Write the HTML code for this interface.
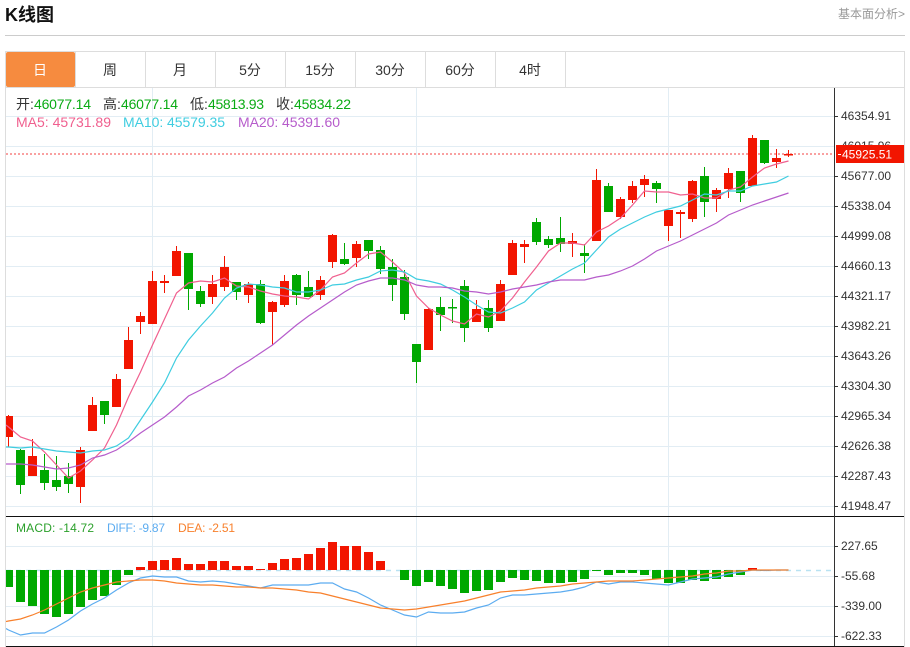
<!DOCTYPE html>
<html lang="zh"><head><meta charset="utf-8"><title>K线图</title>
<style>
html,body{margin:0;padding:0;background:#fff;width:910px;height:647px;overflow:hidden}
svg{display:block}
text{font-family:"Liberation Sans","Noto Sans CJK SC",sans-serif}
</style></head><body>
<svg width="910" height="647" viewBox="0 0 910 647" xmlns="http://www.w3.org/2000/svg">
<defs><clipPath id="c"><rect x="6" y="88" width="828" height="558"/></clipPath></defs>
<text x="5" y="21" font-size="18" font-weight="bold" fill="#111">K线图</text>
<text x="838" y="18" font-size="12" fill="#999">基本面分析&gt;</text>
<path d="M5 35.5H905" stroke="#ccc" fill="none"/>
<!-- frame -->
<path d="M5.5 647V51.5H904.5V647" stroke="#ddd" fill="none"/>
<path d="M6 87.5H904" stroke="#ddd" fill="none"/>
<rect x="6" y="52" width="69" height="35" rx="2" fill="#f68b3f"/>
<path d="M75.5 52V87M145.5 52V87M215.5 52V87M285.5 52V87M355.5 52V87M425.5 52V87M495.5 52V87M565.5 52V87" stroke="#ddd" fill="none"/>
<g font-size="14" text-anchor="middle" fill="#333">
<text x="40" y="75" fill="#fff">日</text><text x="110" y="75">周</text><text x="180" y="75">月</text><text x="250" y="75">5分</text><text x="320" y="75">15分</text><text x="390" y="75">30分</text><text x="460" y="75">60分</text><text x="530" y="75">4时</text>
</g>
<!-- grid -->
<path d="M6 116.5H834M6 146.5H834M6 176.5H834M6 206.5H834M6 236.5H834M6 266.5H834M6 296.5H834M6 326.5H834M6 356.5H834M6 386.5H834M6 416.5H834M6 446.5H834M6 476.5H834M6 506.5H834M6 546.5H834M6 576.5H834M6 606.5H834M6 636.5H834M152.5 88V646M416.5 88V646M668.5 88V646" stroke="#e2edf4" fill="none"/>
<path d="M6 154H834" stroke="#f9a0a0" stroke-width="2" stroke-dasharray="2 2" fill="none"/>
<path d="M6 570.5H834" stroke="#b8e2f2" stroke-width="1.5" stroke-dasharray="5 5" fill="none"/>
<g clip-path="url(#c)" fill="none">
<!-- wicks -->
<path stroke="#f21500" d="M8.5 415V447M32.5 439V476M80.5 447V503M92.5 397V431M116.5 374V407M128.5 327V369M140.5 312V334M152.5 271V324M164.5 275V293M176.5 246V276M212.5 275V304M224.5 256V291M248.5 282V303M272.5 301V345M284.5 275V307M320.5 276V300M332.5 234V268M356.5 241V267M428.5 308V350M476.5 300V322M500.5 280V321M512.5 240V275M524.5 240V263M572.5 233V257M596.5 169V241M620.5 197V219M632.5 181V203M644.5 175V197M668.5 210V241M680.5 210V238M692.5 180V222M716.5 188V212M728.5 168V198M752.5 135V186M776.5 149V168M788.5 150V157"/>
<path stroke="#00a800" d="M20.5 449V494M44.5 454V490M56.5 456V491M68.5 463V493M104.5 401V424M188.5 253V310M200.5 286V307M236.5 282V300M260.5 280V324M296.5 274V305M308.5 271V297M344.5 243V265M368.5 240V259M380.5 246V274M392.5 259V301M404.5 270V320M416.5 344V383M440.5 297V331M452.5 299V323M464.5 280V342M488.5 300V332M536.5 218V245M548.5 236V248M560.5 217V252M584.5 244V273M608.5 183V212M656.5 181V203M704.5 167V217M740.5 171V202M764.5 140V164"/>
<!-- bodies -->
<path stroke="#f21500" stroke-width="9" d="M8.5 416V437M32.5 456V476M80.5 450V487M92.5 405V431M116.5 379V407M128.5 340V369M140.5 316V322M152.5 281V324M164.5 281V283M176.5 251V276M212.5 284V297M224.5 267V287M248.5 284V295M272.5 302V312M284.5 281V305M320.5 280V295M332.5 235V262M356.5 244V258M428.5 309V350M476.5 309V322M500.5 284V321M512.5 243V275M524.5 244V247M572.5 241V244M596.5 180V241M620.5 199V217M632.5 186V200M644.5 179V185M668.5 210V226M680.5 212V214M692.5 181V219M716.5 190V199M728.5 173V189M752.5 138V186M776.5 158V162M788.5 154V155.5"/>
<path stroke="#00a800" stroke-width="9" d="M20.5 450V485M44.5 470V483M56.5 480V487M68.5 476V484M104.5 401V415M188.5 253V289M200.5 291V304M236.5 282V292M260.5 284V323M296.5 275V295M308.5 287V297M344.5 259V264M368.5 240V251M380.5 250V269M392.5 267V285M404.5 277V314M416.5 344V362M440.5 307V315M452.5 307V308.5M464.5 286V328M488.5 308V328M536.5 222V242M548.5 239V245M560.5 238V244M584.5 253V256M608.5 186V212M656.5 183V189M704.5 176V202M740.5 171V193M764.5 140V163"/>
<!-- MACD bars -->
<path stroke="#00a800" stroke-width="9" d="M8.5 570V587M20.5 570V602M32.5 570V606M44.5 570V614M56.5 570V617M68.5 570V614M80.5 570V607M92.5 570V600M104.5 570V596M116.5 570V585M128.5 570V575M404.5 570V580M416.5 570V586M428.5 570V582M440.5 570V586M452.5 570V589M464.5 570V593M476.5 570V591M488.5 570V590M500.5 570V582M512.5 570V578M524.5 570V580M536.5 570V581M548.5 570V583M560.5 570V583M572.5 570V582M584.5 570V579M596.5 570V571M608.5 570V575M620.5 570V573M632.5 570V573M644.5 570V575M656.5 570V579M668.5 570V583M680.5 570V583M692.5 570V580M704.5 570V581M716.5 570V579M728.5 570V577M740.5 570V575M764.5 570V571"/>
<path stroke="#f21500" stroke-width="9" d="M140.5 567V570M152.5 561V570M164.5 560V570M176.5 558V570M188.5 564V570M200.5 564V570M212.5 561V570M224.5 561V570M236.5 566V570M248.5 566V570M260.5 569V570M272.5 563V570M284.5 559V570M296.5 558V570M308.5 554V570M320.5 548V570M332.5 542V570M344.5 546V570M356.5 546V570M368.5 552V570M380.5 561V570M752.5 568V570"/>
<!-- lines -->
<path stroke="#f0608f" stroke-width="1.2" d="M6 425L8.5 427 20.5 437 32.5 441 44.5 452 56.5 465 68.5 478 80.5 471 92.5 460 104.5 448 116.5 425 128.5 397 140.5 372 152.5 345 164.5 319 176.5 293 188.5 283 200.5 281 212.5 282 224.5 278 236.5 286 248.5 287 260.5 291 272.5 294 284.5 296 296.5 297 308.5 299 320.5 290 332.5 277 344.5 273 356.5 263 368.5 254 380.5 252 392.5 262 404.5 273 416.5 296 428.5 308 440.5 315 452.5 321 464.5 324 476.5 314 488.5 317 500.5 311 512.5 298 524.5 282 536.5 267 548.5 251 560.5 243 572.5 243 584.5 245 596.5 232 608.5 226 620.5 218 632.5 205 644.5 191 656.5 192 668.5 192 680.5 195 692.5 194 704.5 198 716.5 198 728.5 190 740.5 187 752.5 177 764.5 168 776.5 164 788.5 161"/>
<path stroke="#3fcde0" stroke-width="1.2" d="M6 447L8.5 447 20.5 448 32.5 447 44.5 449 56.5 451 68.5 452 80.5 453 92.5 451 104.5 450 116.5 446 128.5 438 140.5 420 152.5 402 164.5 383 176.5 358 188.5 340 200.5 326 212.5 313 224.5 298 236.5 288 248.5 284 260.5 285 272.5 287 284.5 288 296.5 292 308.5 292 320.5 290 332.5 285 344.5 284 356.5 280 368.5 277 380.5 271 392.5 270 404.5 272 416.5 279 428.5 281 440.5 284 452.5 290 464.5 297 476.5 305 488.5 312 500.5 313 512.5 308 524.5 302 536.5 290 548.5 283 560.5 276 572.5 269 584.5 263 596.5 250 608.5 237 620.5 229 632.5 223 644.5 217 656.5 212 668.5 209 680.5 206 692.5 200 704.5 194 716.5 195 728.5 191 740.5 191 752.5 186 764.5 184 776.5 182 788.5 176"/>
<path stroke="#b65ccb" stroke-width="1.2" d="M6 464L8.5 464 20.5 464 32.5 465 44.5 467 56.5 469 68.5 468 80.5 465 92.5 458 104.5 455 116.5 450 128.5 442 140.5 433 152.5 425 164.5 417 176.5 407 188.5 396 200.5 390 212.5 383 224.5 377 236.5 368 248.5 361 260.5 353 272.5 345 284.5 335 296.5 325 308.5 316 320.5 308 332.5 300 344.5 292 356.5 285 368.5 281 380.5 278 392.5 278 404.5 280 416.5 285 428.5 287 440.5 287 452.5 288 464.5 291 476.5 292 488.5 294 500.5 292 512.5 289 524.5 287 536.5 285 548.5 282 560.5 280 572.5 280 584.5 280 596.5 277 608.5 275 620.5 271 632.5 266 644.5 259 656.5 251 668.5 246 680.5 241 692.5 235 704.5 229 716.5 223 728.5 215 740.5 210 752.5 205 764.5 201 776.5 197 788.5 193"/>
<path stroke="#5cacf0" stroke-width="1.2" d="M6 628.5L8.5 630 20.5 635 32.5 633 44.5 633 56.5 627 68.5 620 80.5 611 92.5 604 104.5 598 116.5 590 128.5 583 140.5 578 152.5 576 164.5 577 176.5 577 188.5 581 200.5 582 212.5 581 224.5 582 236.5 584 248.5 586 260.5 588 272.5 585 284.5 585 296.5 585 308.5 585 320.5 583 332.5 583 344.5 589 356.5 592 368.5 598 380.5 605 392.5 610 404.5 615 416.5 617 428.5 612 440.5 613 452.5 613 464.5 612 476.5 608 488.5 605 500.5 598 512.5 595 524.5 595 536.5 594 548.5 593 560.5 592 572.5 590 584.5 587 596.5 582 608.5 584 620.5 582 632.5 582 644.5 583 656.5 584 668.5 585 680.5 582 692.5 579 704.5 578 716.5 577 728.5 574 740.5 572 752.5 570 764.5 570.5 776.5 570 788.5 570"/>
<path stroke="#f8802c" stroke-width="1.2" d="M6 621.5L8.5 621 20.5 619 32.5 615 44.5 610 56.5 604 68.5 598 80.5 592 92.5 588 104.5 585 116.5 582 128.5 581 140.5 580 152.5 580 164.5 581 176.5 583 188.5 584 200.5 585 212.5 585 224.5 586 236.5 587 248.5 587 260.5 588 272.5 588 284.5 589 296.5 590 308.5 592 320.5 593 332.5 596 344.5 599 356.5 602 368.5 605 380.5 608 392.5 609 404.5 610 416.5 609 428.5 607 440.5 605 452.5 603 464.5 601 476.5 598 488.5 595 500.5 592 512.5 591 524.5 590 536.5 588 548.5 587 560.5 586 572.5 584 584.5 583 596.5 582 608.5 581 620.5 581 632.5 581 644.5 580 656.5 579 668.5 578 680.5 577 692.5 576 704.5 574 716.5 573 728.5 571 740.5 571 752.5 570 764.5 570 776.5 570 788.5 570"/>
</g>
<!-- axes -->
<path d="M6 516.5H904M6 646.5H904" stroke="#111" fill="none"/>
<path d="M834.5 88V646" stroke="#333" fill="none"/>
<path d="M835 116.5H838M835 176.5H838M835 206.5H838M835 236.5H838M835 266.5H838M835 296.5H838M835 326.5H838M835 356.5H838M835 386.5H838M835 416.5H838M835 446.5H838M835 476.5H838M835 506.5H838M835 546.5H838M835 576.5H838M835 606.5H838M835 636.5H838" stroke="#333" fill="none"/>
<g font-size="12" fill="#333">
<text x="841" y="120">46354.91</text>
<text x="841" y="150">46015.96</text>
<text x="841" y="180">45677.00</text>
<text x="841" y="210">45338.04</text>
<text x="841" y="240">44999.08</text>
<text x="841" y="270">44660.13</text>
<text x="841" y="300">44321.17</text>
<text x="841" y="330">43982.21</text>
<text x="841" y="360">43643.26</text>
<text x="841" y="390">43304.30</text>
<text x="841" y="420">42965.34</text>
<text x="841" y="450">42626.38</text>
<text x="841" y="480">42287.43</text>
<text x="841" y="510">41948.47</text>
<text x="841" y="550">227.65</text>
<text x="841" y="580">-55.68</text>
<text x="841" y="610">-339.00</text>
<text x="841" y="640">-622.33</text>
</g>
<rect x="836" y="145" width="68" height="18" fill="#f21500"/>
<path d="M838 154.5H841" stroke="#fff" fill="none"/>
<text x="842" y="158.5" font-size="12" fill="#fff">45925.51</text>
<!-- legends -->
<g font-size="14">
<text x="16" y="109" fill="#333">开:</text><text x="34" y="109" fill="#0aab14" textLength="57">46077.14</text>
<text x="103" y="109" fill="#333">高:</text><text x="121" y="109" fill="#0aab14" textLength="57">46077.14</text>
<text x="190" y="109" fill="#333">低:</text><text x="208" y="109" fill="#0aab14" textLength="56">45813.93</text>
<text x="276" y="109" fill="#333">收:</text><text x="294" y="109" fill="#0aab14" textLength="57">45834.22</text>
<text x="16" y="127" fill="#f0608f" textLength="95">MA5: 45731.89</text>
<text x="123" y="127" fill="#3fcde0" textLength="102">MA10: 45579.35</text>
<text x="238" y="127" fill="#b65ccb" textLength="102">MA20: 45391.60</text>
</g>
<g font-size="12">
<text x="16" y="532" fill="#2ba02b" textLength="78">MACD: -14.72</text>
<text x="107" y="532" fill="#5cacf0" textLength="58">DIFF: -9.87</text>
<text x="178" y="532" fill="#f8802c" textLength="57">DEA: -2.51</text>
</g>
</svg>
</body></html>
